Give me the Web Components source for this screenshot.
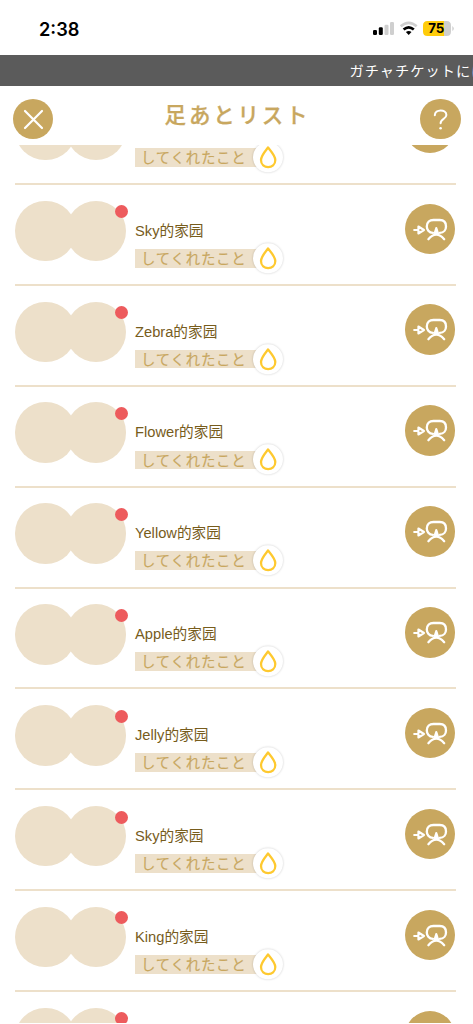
<!DOCTYPE html>
<html lang="ja">
<head>
<meta charset="utf-8">
<title>足あとリスト</title>
<style>
html,body{margin:0;height:100%;overflow:hidden;background:#fff}
body{font-family:"Liberation Sans","Noto Sans CJK JP",sans-serif}
</style>
</head>
<body>
<footprint-app></footprint-app>
<script>
function define(name, html, setup) {
  customElements.define(name, class extends HTMLElement {
    connectedCallback() {
      if (this.shadowRoot) return;
      this.attachShadow({mode: 'open'}).innerHTML = html;
      if (setup) setup(this.shadowRoot, this);
    }
  });
}

define('status-bar', `
<style>
:host{display:flex;height:55px;box-sizing:border-box;padding:0 19px 0 39px;justify-content:space-between;font-family:Inter,sans-serif}
.time{font-size:18.2px;font-weight:600;line-height:22px;margin-top:17.5px;color:#000}
svg{display:block;margin-top:18px}
</style>
<span class="time">2:38</span>
<svg width="84" height="20" viewBox="370 18 84 20">
  <g fill="#000"><rect x="373" y="30" width="4" height="5" rx="1.2"/><rect x="378.8" y="27.3" width="4" height="7.7" rx="1.2"/></g>
  <g fill="#cfcfcf"><rect x="384.5" y="24.7" width="4" height="10.3" rx="1.2"/><rect x="390" y="22" width="4" height="13" rx="1.2"/></g>
  <g fill="none" stroke-width="2.6"><path d="M400.7 26.3Q408.7 19.4 416.7 26.3" stroke="#cfcfcf"/><path d="M403.6 29.5Q408.7 25.1 413.8 29.5" stroke="#000" stroke-width="2.7"/></g>
  <path d="M408.7 35L405.9 32.1Q408.7 30 411.5 32.1Z" fill="#000"/>
  <path d="M427.5 21H444V36H427.5Q423 36 423 31.5V25.5Q423 21 427.5 21Z" fill="#ffcc0a"/>
  <path d="M444 21H446.5Q451 21 451 25.5V31.5Q451 36 446.5 36H444Z" fill="#cfcfcf"/>
  <path d="M452.3 26Q453.8 27 453.8 28.5T452.3 31Z" fill="#cfcfcf"/>
  <text x="436.3" y="33.2" text-anchor="middle" font-family="Inter" font-size="13.3" font-weight="700">75</text>
</svg>`);

define('news-ticker', `
<style>
:host{display:block;height:31px;background:#5b5b5b;color:#fff;overflow:hidden;white-space:nowrap;box-sizing:border-box;padding-left:349.5px;font:400 14.2px/30px "Noto Sans CJK JP",sans-serif;letter-spacing:1.05px}
</style><slot></slot>`);

define('round-button', `
<style>
:host{display:flex;width:40.5px;height:40.5px;border-radius:50%;background:#c8a75f;align-items:center;justify-content:center;flex:none}
::slotted(svg){display:block}
</style><slot></slot>`);

define('page-header', `
<style>
:host{display:flex;height:59px;box-sizing:border-box;padding:12.8px 12.5px 0 12.5px;justify-content:space-between;align-items:flex-start}
h1{margin:-1px 0 0 2px;font:500 21.5px/32px "Noto Sans CJK JP",sans-serif;letter-spacing:2.8px;color:#c8a75f;-webkit-text-stroke:.3px #c8a75f}
</style>
<round-button><svg width="41" height="41"><path d="M12 12L29 29M29 12L12 29" stroke="#fff" stroke-width="2.2" stroke-linecap="round"/></svg></round-button>
<h1><slot></slot></h1>
<round-button><svg width="41" height="41"><path d="M14.8 16.2C14.8 10 26.4 9.8 26.4 16C26.4 20.2 20.6 19.6 20.6 24.2" fill="none" stroke="#fff" stroke-width="2" stroke-linecap="round"/><circle cx="20.6" cy="29.2" r="1.3" fill="#fff"/></svg></round-button>`);

define('avatar-pair', `
<style>
:host{display:flex;position:relative;width:111px;height:60.5px;flex:none}
i{width:60.5px;height:60.5px;border-radius:50%;background:#ede0ca;flex:none}
i+i{margin-left:-10px}
b{position:absolute;right:-2px;top:4.6px;width:13px;height:13px;border-radius:50%;background:#ed5b5d}
</style><i></i><i></i><b></b>`);

define('deed-label', `
<style>
:host{display:flex;position:relative;width:133px;height:18.7px;background:#ede0ca;box-sizing:border-box;padding-left:6px;color:#c8a75f;font:400 14.4px/17px "Noto Sans CJK JP",sans-serif;letter-spacing:.8px;white-space:nowrap;-webkit-text-stroke:.15px #c8a75f}
svg{position:absolute;left:116.2px;top:-8.2px;overflow:visible;filter:drop-shadow(0 0 1px #0003)}
</style><slot></slot>
<svg width="34" height="34"><circle cx="17" cy="17.3" r="15" fill="#fff"/><path d="M17 7.5C14.5 10.8 10 15.6 10 20.1C10 29.4 24.3 29.4 24.3 20.1C24.3 15.6 19.5 10.8 17 7.5Z" fill="none" stroke="#fec92f" stroke-width="2.3" stroke-linejoin="round"/></svg>`);

define('visit-button', `
<style>
:host{display:block;width:50.5px;height:50.5px;border-radius:50%;background:#c8a75f;flex:none}
svg{display:block}
</style>
<svg width="50.5" height="50.5" viewBox="0 0 50.5 50.5" fill="none" stroke="#fff" stroke-width="2.1" stroke-linecap="round" stroke-linejoin="round">
  <path d="M9.2 26H13M13.4 22.5L19 26L13.4 29.5Z"/>
  <path d="M28 28.8C23.8 28.8 21.8 25.2 21.8 22.4C21.8 18.4 24.6 16 28.4 16H34.8C38.6 16 41 18.4 41 22.4C41 25.6 39 28.8 34.7 28.8" stroke-width="2.3"/>
  <path d="M31.3 24L29.4 30H33.2Z" fill="#fff"/>
  <path d="M23.4 35.2Q31.3 26 39.2 35.2" stroke-width="2.3"/>
</svg>`);

define('visitor-row', `
<style>
:host{display:flex;box-sizing:border-box;height:100.875px;padding:15.6px 1px 0 0;border-bottom:2px solid #ede0ca;align-items:flex-start}
.info{flex:1;padding:19px 0 0 9px}
.name{height:22px;margin-bottom:7.2px;font:400 14.7px/22px "Liberation Sans","Noto Sans CJK SC",sans-serif;color:#775c1c;white-space:nowrap}
visit-button{margin-top:2.9px}
</style>
<avatar-pair></avatar-pair>
<div class="info"><div class="name"><slot></slot></div><deed-label>してくれたこと</deed-label></div>
<visit-button></visit-button>`, (root, host) => {
  if (host.hasAttribute('pending')) root.querySelector('.info').replaceChildren();
});

define('visitor-list', `
<style>
:host{display:block;height:878px;overflow:hidden}
.scroll{margin:-60.8px 17px 0 15px}
</style><div class="scroll"><slot></slot></div>`);

define('footprint-app', `
<style>
:host{display:block;width:473px;height:1024px;overflow:hidden;background:#fff}
</style>
<status-bar></status-bar>
<news-ticker>ガチャチケットには</news-ticker>
<page-header>足あとリスト</page-header>
<visitor-list></visitor-list>`, root => {
  const list = root.querySelector('visitor-list');
  const names = ['', 'Sky', 'Zebra', 'Flower', 'Yellow', 'Apple', 'Jelly', 'Sky', 'King', ''];
  names.forEach((name, i) => {
    const row = document.createElement('visitor-row');
    row.textContent = name && name + '的家园';
    if (i === names.length - 1) row.setAttribute('pending', '');
    list.append(row);
  });
});
</script>
</body>
</html>
